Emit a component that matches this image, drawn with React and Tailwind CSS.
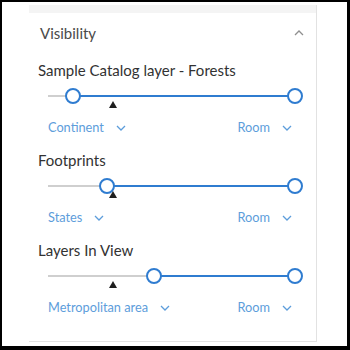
import React from 'react';

const font = { fontFamily: 'Lato, "Noto Sans", sans-serif' };

const sections = [
  { title: 'Sample Catalog layer - Forests', min: 25, left: 'Continent', right: 'Room' },
  { title: 'Footprints', min: 59, left: 'States', right: 'Room' },
  { title: 'Layers In View', min: 105.5, left: 'Metropolitan area', right: 'Room' },
];

// marker triangle sits at the same spot on every slider
const MARKER = 65.5;
const MAX = 247;

const ChevronDown = () => (
  <svg width="10" height="6" viewBox="0 0 10 6" className="ml-3 shrink-0">
    <path d="M1 1l4 4 4-4" fill="none" stroke="#5d9ddb" strokeWidth="1.3" />
  </svg>
);

const ChevronUp = () => (
  <svg width="10" height="6" viewBox="0 0 10 6">
    <path d="M1 5l4-4 4 4" fill="none" stroke="#8f8f8f" strokeWidth="1.3" />
  </svg>
);

const Slider = ({ min }) => (
  <div className="relative h-[24px] w-[256px]">
    {/* gray track */}
    <div className="absolute left-0 top-[11px] h-[2px] w-[247px] bg-[#cfcfcf]" />
    {/* active range */}
    <div
      className="absolute top-[11px] h-[2px] bg-[#2f7cd0]"
      style={{ left: min, width: MAX - min }}
    />
    <div
      className="absolute top-[17px] h-0 w-0 border-x-[4.5px] border-b-[7px] border-x-transparent border-b-[#1e1e1e] z-10"
      style={{ left: MARKER - 4.5 }}
    />
    <div
      className="absolute top-[4px] h-[16px] w-[16px] rounded-full border-2 border-[#2f7cd0] bg-white"
      style={{ left: min - 8 }}
    />
    <div
      className="absolute top-[4px] h-[16px] w-[16px] rounded-full border-2 border-[#2f7cd0] bg-white"
      style={{ left: MAX - 8 }}
    />
  </div>
);

const Section = ({ s }) => (
  <div className="pl-[9px] pb-[12px]">
    <div className="h-[20px] flex items-center text-[15px] text-[#323232]">{s.title}</div>
    <div className="ml-[10px] mt-[4px]">
      <Slider min={s.min} />
      <div className="mt-[10px] h-[20px] w-[244px] flex items-center justify-between text-[12.75px] text-[#5d9ddb]">
        <div className="flex items-center">
          <span>{s.left}</span>
          <ChevronDown />
        </div>
        <div className="flex items-center">
          <span>{s.right}</span>
          <ChevronDown />
        </div>
      </div>
    </div>
  </div>
);

export default function App() {
  return (
    <div
      className="w-[350px] h-[350px] bg-white border-t-2 border-l-2 border-r-[3px] border-b-4 border-black"
      style={font}
    >
      <div className="ml-[27px] mt-[3px] w-[288px] h-[337px] border-r border-b border-[#e2e2e2] bg-white">
        <div className="h-[8px] bg-[#f4f4f4]" />
        <div className="mt-[10px] h-[20px] pl-[11px] pr-[12px] flex items-center justify-between text-[15px] text-[#4a4a4a]">
          <span>Visibility</span>
          <ChevronUp />
        </div>
        <div className="mt-[17px]">
          {sections.map((s, i) => (
            <Section key={i} s={s} />
          ))}
        </div>
      </div>
    </div>
  );
}
